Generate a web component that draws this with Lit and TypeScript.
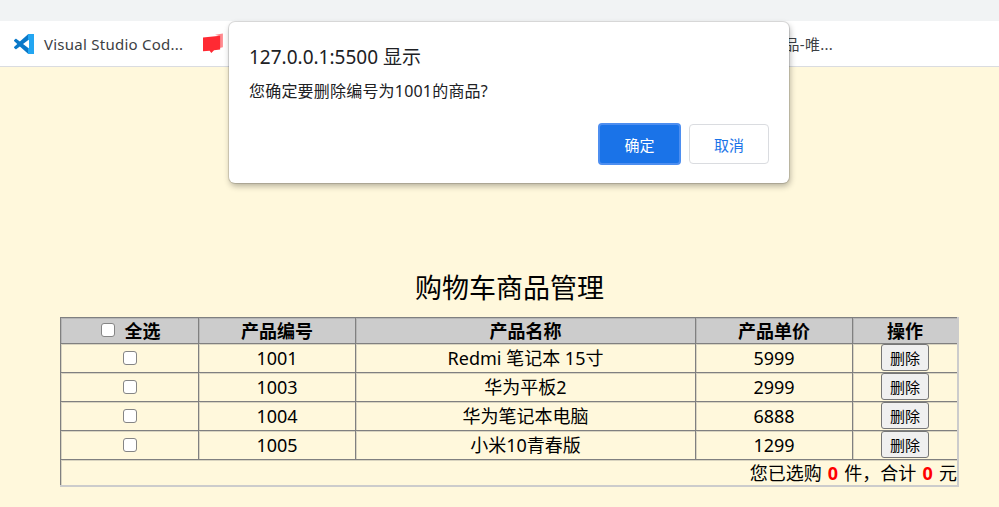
import { LitElement, html, css } from 'lit'
import { customElement, state } from 'lit/decorators.js'

interface Product {
  id: number
  name: string
  price: number
}

@customElement('app-root')
export class AppRoot extends LitElement {
  @state() products: Product[] = [
    { id: 1001, name: 'Redmi 笔记本 15寸', price: 5999 },
    { id: 1003, name: '华为平板2', price: 2999 },
    { id: 1004, name: '华为笔记本电脑', price: 6888 },
    { id: 1005, name: '小米10青春版', price: 1299 },
  ]

  static styles = css`
    :host {
      display: block;
      position: relative;
      width: 999px;
      height: 507px;
      overflow: hidden;
      background: #fff8dc;
      font-family: "Noto Sans", "Noto Sans CJK SC", sans-serif;
      color: #000;
    }

    /* ---- browser chrome ---- */
    .strip {
      height: 21px;
      background: #f1f3f4;
    }
    .bookmarks {
      display: flex;
      align-items: center;
      height: 45px;
      padding-left: 14px;
      background: #fff;
      border-bottom: 1px solid #dadce0;
      font-size: 15px;
      letter-spacing: 0.25px;
      color: #3c4043;
    }
    .bookmark {
      display: flex;
      align-items: center;
      gap: 10px;
    }
    .bookmark svg {
      flex: none;
    }
    .bookmark.red {
      margin-left: 20px;
    }
    .bookmark.tail {
      margin-left: auto;
      margin-right: 166px;
    }

    /* ---- page ---- */
    .page {
      padding: 0 40px 0 60px;
    }
    h1 {
      margin: 0;
      padding-top: 200px;
      height: 50px;
      font-size: 27px;
      font-weight: 400;
      line-height: 42px;
      text-align: center;
    }
    table {
      width: 899px;
      table-layout: fixed;
      border-collapse: collapse;
      font-size: 18px;
      text-align: center;
      border-top: 1px solid #808080;
      border-left: 1px solid #808080;
      border-right: 2px solid #ccc;
      border-bottom: 2px solid #ccc;
    }
    th, td {
      padding: 0;
      border: 1px solid #808080;
      line-height: 24px;
      box-shadow: inset 1px 1px 0 rgba(128, 128, 128, 0.3);
    }
    th:last-child, td:last-child {
      border-right: 2px solid #ccc;
    }
    thead tr {
      height: 26px;
      background: #ccc;
    }
    th {
      font-weight: 700;
    }
    tbody tr {
      height: 29px;
    }
    tr.sum {
      height: 26px;
    }
    td.total {
      box-sizing: border-box;
      padding-top: 2px;
      line-height: 22px;
      text-align: right;
      border-bottom: 2px solid #ccc;
    }
    .total b {
      margin: 0 1.5px;
      color: #f00;
    }
    input[type='checkbox'] {
      appearance: none;
      -webkit-appearance: none;
      box-sizing: border-box;
      width: 14px;
      height: 14px;
      margin: 0;
      vertical-align: 0;
      background: #fff;
      border: 1px solid #858585;
      border-radius: 3px;
    }
    .all {
      padding-left: 2px;
    }
    .all input {
      margin-right: 10px;
      vertical-align: 1px;
    }
    .del {
      box-sizing: border-box;
      width: 48px;
      height: 27px;
      padding: 0;
      display: block;
      margin: -1px auto 1px 28px;
      font: 15px "Noto Sans", "Noto Sans CJK SC", sans-serif;
      color: #000;
      background: #f0f0f0;
      border: 1px solid #767676;
      border-radius: 3px;
    }

    /* ---- alert dialog ---- */
    .dialog {
      position: absolute;
      left: 229px;
      top: 22px;
      box-sizing: border-box;
      width: 560px;
      height: 161px;
      padding: 22px 20px 0;
      background: #fff;
      border-radius: 6px;
      box-shadow: 0 0 0 1px rgba(0, 0, 0, 0.12), 1px 3px 6px rgba(0, 0, 0, 0.3);
      color: #202124;
    }
    .dialog h2 {
      margin: 0;
      font-size: 19px;
      font-weight: 400;
      line-height: 26px;
    }
    .dialog p {
      margin: 9px 0 0;
      font-size: 16px;
      letter-spacing: 0.2px;
      line-height: 24px;
    }
    .actions {
      display: flex;
      justify-content: flex-end;
      gap: 8px;
      margin-top: 21px;
    }
    .actions button {
      box-sizing: border-box;
      width: 80px;
      height: 40px;
      padding: 0;
      font: 15px "Noto Sans", "Noto Sans CJK SC", sans-serif;
      border-radius: 4px;
    }
    .actions .ok {
      width: 83px;
      height: 42px;
      margin-top: -1px;
      background: #1a73e8;
      color: #fff;
      border: 2px solid #4d8ef0;
    }
    .cancel {
      background: #fff;
      color: #1a73e8;
      border: 1px solid #dadce0;
    }
  `

  render() {
    return html`
      <div class="strip"></div>
      <div class="bookmarks">
        <span class="bookmark">
          <svg width="20" height="20" viewBox="0 0 100 100">
            <defs>
              <clipPath id="vs-right"><rect x="70" y="0" width="30" height="100" /></clipPath>
            </defs>
            <path id="vs" fill="#0a78c8" fill-rule="evenodd" d="M70.9 99.300C72.500 99.900 74.300 99.900 75.900 99.100L96.500 89.200C98.600 88.200 100 86 100 83.600V16.400C100 14 98.600 11.800 96.500 10.800L75.900 0.900C73.800-0.100 71.300 0.100 69.500 1.400C69.300 1.600 69 1.800 68.800 2.100L29.400 38L12.200 25C10.600 23.800 8.400 23.900 6.900 25.200L1.400 30.300C-0.500 31.900-0.500 34.800 1.400 36.400L16.200 50L1.400 63.600C-0.500 65.200-0.500 68.100 1.400 69.700L6.900 74.800C8.400 76.100 10.600 76.200 12.200 75L29.400 62L68.800 97.900C69.400 98.500 70.100 99 70.900 99.300ZM75 27.300L45.100 50L75 72.700V27.300Z" />
            <path clip-path="url(#vs-right)" fill="#23a6f2" d="M70 0H100V100H70Z M75 27.300V72.700L70 69V31Z" fill-rule="evenodd" />
          </svg>
          Visual Studio Cod...
        </span>
        <span class="bookmark red">
          <svg width="21" height="21" viewBox="0 0 19 19">
            <path fill="#ff8a8f" d="M11 1.500 18 0.500V13l-3 .5V3z" />
            <path fill="#ff2a33" d="M0 4 15.500 2.500V15l-5.500.5L7.500 18 6 16 0 16.500z" />
          </svg>
        </span>
        <span class="bookmark tail">品-唯...</span>
      </div>
      <div class="page">
        <h1>购物车商品管理</h1>
        <table>
          <colgroup>
            <col style="width:138px" />
            <col style="width:157px" />
            <col style="width:340px" />
            <col style="width:157px" />
            <col />
          </colgroup>
          <thead>
            <tr>
              <th class="all"><input type="checkbox" />全选</th>
              <th>产品编号</th>
              <th>产品名称</th>
              <th>产品单价</th>
              <th>操作</th>
            </tr>
          </thead>
          <tbody>
            ${this.products.map(
              (p) => html`
                <tr>
                  <td><input type="checkbox" /></td>
                  <td>${p.id}</td>
                  <td>${p.name}</td>
                  <td>${p.price}</td>
                  <td><button class="del">删除</button></td>
                </tr>
              `,
            )}
            <tr class="sum">
              <td class="total" colspan="5">您已选购 <b>0</b> 件，合计 <b>0</b> 元</td>
            </tr>
          </tbody>
        </table>
      </div>
      <div class="dialog">
        <h2>127.0.0.1:5500 显示</h2>
        <p>您确定要删除编号为1001的商品?</p>
        <div class="actions">
          <button class="ok">确定</button>
          <button class="cancel">取消</button>
        </div>
      </div>
    `
  }
}

declare global {
  interface HTMLElementTagNameMap {
    'app-root': AppRoot
  }
}
